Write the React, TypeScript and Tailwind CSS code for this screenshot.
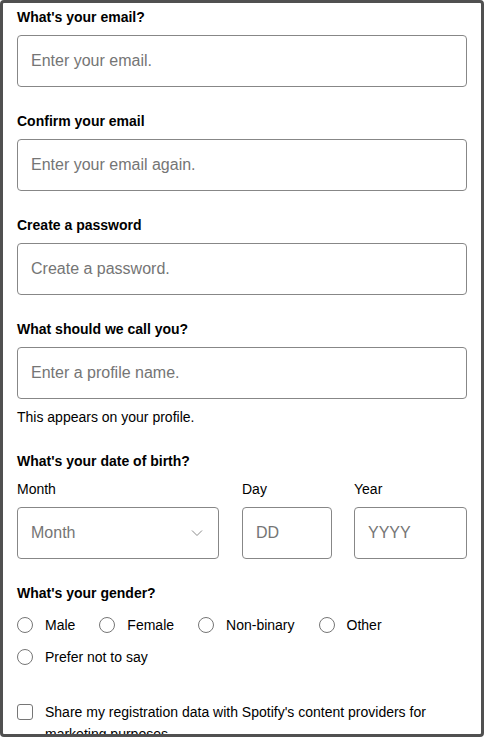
import React from "react";

const fields = [
  { label: "What's your email?", placeholder: "Enter your email." },
  { label: "Confirm your email", placeholder: "Enter your email again." },
  { label: "Create a password", placeholder: "Create a password." },
  { label: "What should we call you?", placeholder: "Enter a profile name.", hint: "This appears on your profile." },
];

const genders = ["Male", "Female", "Non-binary", "Other", "Prefer not to say"];

function Box({ children, className = "" }: { children: React.ReactNode; className?: string }) {
  return (
    <div className={`h-[52px] border border-[#878787] rounded-[4px] flex items-center px-[13px] text-[16px] text-[#757575] ${className}`}>
      {children}
    </div>
  );
}

export default function App() {
  return (
    <div className="w-[486px] h-[743px] bg-white" style={{ fontFamily: '"Liberation Sans", Arial, sans-serif' }}>
      <div className="w-[484px] h-[737px] border-[3px] border-[#505050] rounded-[4px] overflow-hidden px-[14px] pt-[4px] text-black">
        {fields.map((f) => (
          <div key={f.label} className="mb-[24px]">
            <div className="text-[14px] leading-[20px] font-bold mb-[8px]">{f.label}</div>
            <Box>{f.placeholder}</Box>
            {f.hint && <div className="text-[14px] leading-[20px] mt-[8px]">{f.hint}</div>}
          </div>
        ))}

        <div className="mb-[24px]">
          <div className="text-[14px] leading-[20px] font-bold mb-[8px]">What's your date of birth?</div>
          <div className="flex">
            <div className="w-[202px] mr-[23px]">
              <div className="text-[14px] leading-[20px] mb-[8px]">Month</div>
              <Box className="justify-between">
                <span>Month</span>
                <svg width="12" height="8" viewBox="0 0 12 8" className="mr-[2px]">
                  <path d="M1 1.5 L6 6.5 L11 1.5" fill="none" stroke="#8a8a8a" strokeWidth="1" />
                </svg>
              </Box>
            </div>
            <div className="w-[90px] mr-[22px]">
              <div className="text-[14px] leading-[20px] mb-[8px]">Day</div>
              <Box>DD</Box>
            </div>
            <div className="flex-1">
              <div className="text-[14px] leading-[20px] mb-[8px]">Year</div>
              <Box>YYYY</Box>
            </div>
          </div>
        </div>

        <div>
          <div className="text-[14px] leading-[20px] font-bold mb-[12px]">What's your gender?</div>
          <div className="flex flex-wrap gap-x-[24px] gap-y-[12px] text-[14px] leading-[20px]">
            {genders.map((g) => (
              <label key={g} className="flex items-center gap-[12px]">
                <span className="w-[16px] h-[16px] rounded-full border border-[#767676]" />
                <span>{g}</span>
              </label>
            ))}
          </div>
        </div>

        <div className="flex items-start gap-[12px] mt-[34px] text-[14px] leading-[22px]">
          <span className="w-[16px] h-[16px] shrink-0 rounded-[3px] border border-[#767676] mt-[3px]" />
          <span>Share my registration data with Spotify's content providers for marketing purposes.</span>
        </div>
      </div>
    </div>
  );
}
